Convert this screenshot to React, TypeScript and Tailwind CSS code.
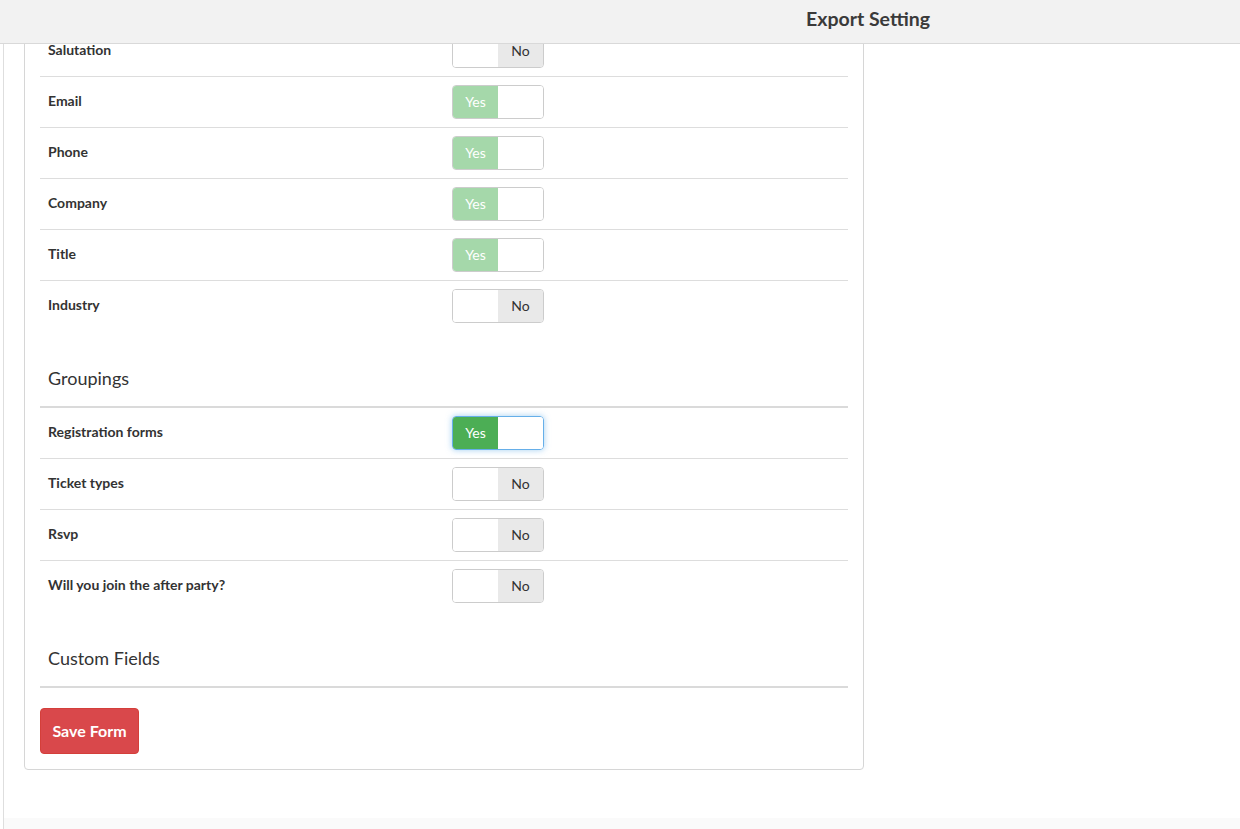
import React from "react";

type Row = { label: string; on: boolean; faded?: boolean; focus?: boolean; last?: boolean };

const fields: Row[] = [
  { label: "Salutation", on: false },
  { label: "Email", on: true, faded: true },
  { label: "Phone", on: true, faded: true },
  { label: "Company", on: true, faded: true },
  { label: "Title", on: true, faded: true },
  { label: "Industry", on: false, last: true },
];

const groupings: Row[] = [
  { label: "Registration forms", on: true, focus: true },
  { label: "Ticket types", on: false },
  { label: "Rsvp", on: false },
  { label: "Will you join the after party?", on: false, last: true },
];

function Toggle({ on, faded, focus }: { on: boolean; faded?: boolean; focus?: boolean }) {
  return (
    <div
      className={
        "flex h-[34px] w-[92px] overflow-hidden rounded-[4px] border text-[14px] leading-[32px] " +
        (focus
          ? "border-[#66afe9] shadow-[0_0_6px_rgba(102,175,233,0.6)]"
          : "border-[#cccccc]")
      }
    >
      {on ? (
        <>
          <div
            className={
              "w-[45px] text-center text-white " + (faded ? "bg-[#a5d8aa]" : "bg-[#4cae55]")
            }
          >
            Yes
          </div>
          <div className="flex-1 bg-white" />
        </>
      ) : (
        <>
          <div className="w-[45px] bg-white" />
          <div className="flex-1 bg-[#e9e9e9] text-center text-[#333]">No</div>
        </>
      )}
    </div>
  );
}

function FieldRow({ row }: { row: Row }) {
  return (
    <div
      className={
        "flex items-center py-[8px] " + (row.last ? "" : "border-b border-[#dddddd]")
      }
    >
      <div className="w-[412px] pb-[3px] pl-[8px] text-[14px] font-bold leading-[20px] text-[#333]">
        {row.label}
      </div>
      <Toggle on={row.on} faded={row.faded} focus={row.focus} />
    </div>
  );
}

function Heading({ title }: { title: string }) {
  return (
    <div className="border-b-2 border-[#dadada] pb-[17px] pl-[8px] pt-[36px] text-[18px] leading-[22px] text-[#333]">
      {title}
    </div>
  );
}

export default function App() {
  return (
    <div
      className="flex h-[829px] w-[1240px] flex-col overflow-hidden bg-white"
      style={{ fontFamily: "Lato, 'Open Sans', sans-serif" }}
    >
      <div className="h-[44px] shrink-0 border-b border-[#d9d9d9] bg-[#f2f2f2] pl-[806px] text-[19.5px] font-bold leading-[38px] text-[#3a3a3a]">
        Export Setting
      </div>
      <div className="ml-[3px] flex flex-1 flex-col overflow-hidden border-l border-[#dedede]">
        <div className="flex-1 overflow-hidden">
          <div className="-mt-[19px] ml-[20px] w-[840px] rounded-[4px] border border-[#d6d6d6] px-[15px] pb-[15px]">
            {fields.map((r) => (
              <FieldRow key={r.label} row={r} />
            ))}
            <Heading title="Groupings" />
            {groupings.map((r) => (
              <FieldRow key={r.label} row={r} />
            ))}
            <Heading title="Custom Fields" />
            <button className="mt-[20px] h-[46px] w-[99px] rounded-[4px] border border-[#d43f3a] bg-[#d9484b] text-[16px] font-bold text-white">
              Save Form
            </button>
          </div>
        </div>
        <div className="h-[11px] shrink-0 bg-[#fafafa]" />
      </div>
    </div>
  );
}
